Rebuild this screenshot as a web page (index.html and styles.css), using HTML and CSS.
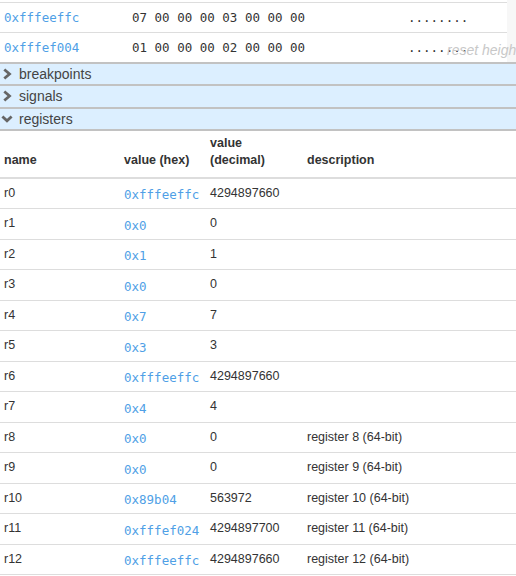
FILE: index.html
```html
<!DOCTYPE html>
<html>
<head>
<meta charset="utf-8">
<link rel="stylesheet" href="styles.css">
</head>
<body>
<div class="page">
  <div class="memview">
    <div class="memscroll">
      <div class="memrow">
        <span class="addr">0xfffeeffc</span>
        <span class="bytes">07 00 00 00 03 00 00 00</span>
        <span class="ascii">........</span>
      </div>
      <div class="memrow">
        <span class="addr">0xfffef004</span>
        <span class="bytes">01 00 00 00 02 00 00 00</span>
        <span class="ascii">........</span>
      </div>
    </div>
    <div class="scrollbar"></div>
    <span class="reset">reset height</span>
  </div>

  <div class="section">
    <svg class="chev" viewBox="0 0 12 12" width="12" height="12"><path d="M3.3 1.5 L8.5 6 L3.3 10.5" fill="none" stroke="#666666" stroke-width="2.8"/></svg>
    <span>breakpoints</span>
  </div>
  <div class="section">
    <svg class="chev" viewBox="0 0 12 12" width="12" height="12"><path d="M3.3 1.5 L8.5 6 L3.3 10.5" fill="none" stroke="#666666" stroke-width="2.8"/></svg>
    <span>signals</span>
  </div>
  <div class="section last">
    <svg class="chev" viewBox="0 0 12 12" width="12" height="12"><path d="M1.4 3.4 L6 7.8 L10.6 3.4" fill="none" stroke="#666666" stroke-width="2.8"/></svg>
    <span>registers</span>
  </div>

  <table class="regs">
    <colgroup>
      <col class="c-name"><col class="c-hex"><col class="c-dec"><col>
    </colgroup>
    <thead>
      <tr><th>name</th><th>value (hex)</th><th>value<br>(decimal)</th><th>description</th></tr>
    </thead>
    <tbody>
      <tr><td>r0</td><td class="hex">0xfffeeffc</td><td>4294897660</td><td></td></tr>
      <tr><td>r1</td><td class="hex">0x0</td><td>0</td><td></td></tr>
      <tr><td>r2</td><td class="hex">0x1</td><td>1</td><td></td></tr>
      <tr><td>r3</td><td class="hex">0x0</td><td>0</td><td></td></tr>
      <tr><td>r4</td><td class="hex">0x7</td><td>7</td><td></td></tr>
      <tr><td>r5</td><td class="hex">0x3</td><td>3</td><td></td></tr>
      <tr><td>r6</td><td class="hex">0xfffeeffc</td><td>4294897660</td><td></td></tr>
      <tr><td>r7</td><td class="hex">0x4</td><td>4</td><td></td></tr>
      <tr><td>r8</td><td class="hex">0x0</td><td>0</td><td>register 8 (64-bit)</td></tr>
      <tr><td>r9</td><td class="hex">0x0</td><td>0</td><td>register 9 (64-bit)</td></tr>
      <tr><td>r10</td><td class="hex">0x89b04</td><td>563972</td><td>register 10 (64-bit)</td></tr>
      <tr><td>r11</td><td class="hex">0xfffef024</td><td>4294897700</td><td>register 11 (64-bit)</td></tr>
      <tr><td>r12</td><td class="hex">0xfffeeffc</td><td>4294897660</td><td>register 12 (64-bit)</td></tr>
    </tbody>
  </table>
</div>
</body>
</html>
```

FILE: styles.css
```css
html, body {
  margin: 0;
  padding: 0;
  background: #ffffff;
  overflow: hidden;
}
body {
  width: 516px;
  height: 576px;
  font-family: "Liberation Sans", Arial, sans-serif;
  font-size: 12.5px;
  color: #333333;
}
.page {
  display: flex;
  flex-direction: column;
}
.memview {
  position: relative;
  height: 62px;
  display: flex;
  overflow: hidden;
}
.memscroll {
  width: 507px;
  padding-top: 1.5px;
}
.scrollbar {
  flex: 1;
  background: #f7f7f7;
}
.memrow {
  display: flex;
  border-top: 1px solid #dddddd;
  padding: 6px 0;
  line-height: 17.5px;
  font-family: "DejaVu Sans Mono", monospace;
  font-size: 12.5px;
  color: #333333;
}
.addr {
  width: 128px;
  padding-left: 4px;
  color: #4f9fe6;
}
.bytes {
  width: 276px;
}
.ascii {
  flex: 1;
}
.reset {
  position: absolute;
  left: 447px;
  top: 42px;
  font-style: italic;
  font-size: 14px;
  line-height: 16px;
  color: #c8c8c8;
  white-space: nowrap;
}
.section {
  display: flex;
  align-items: center;
  gap: 6px;
  height: 20.3px;
  padding-left: 1px;
  background: #dcefff;
  border-top: 2px solid #c2c2c2;
  font-size: 14px;
  color: #444444;
}
.section.last {
  border-bottom: 2px solid #c2c2c2;
}
.chev {
  flex: none;
}
.regs {
  width: 516px;
  border-collapse: collapse;
  table-layout: fixed;
}
.c-name { width: 120px; }
.c-hex { width: 86px; }
.c-dec { width: 97px; }
.regs th {
  text-align: left;
  vertical-align: bottom;
  font-weight: bold;
  line-height: 17.5px;
  padding: 4px 4px 7px 4px;
  border-bottom: 2px solid #dddddd;
  color: #333333;
}
.regs td {
  text-align: left;
  vertical-align: top;
  line-height: 17.5px;
  padding: 6px 4px;
  border-bottom: 1px solid #dddddd;
  white-space: nowrap;
}
.regs td.hex {
  font-family: "DejaVu Sans Mono", monospace;
  color: #4f9fe6;
  padding-top: 7.5px;
  padding-bottom: 4.5px;
}
```
